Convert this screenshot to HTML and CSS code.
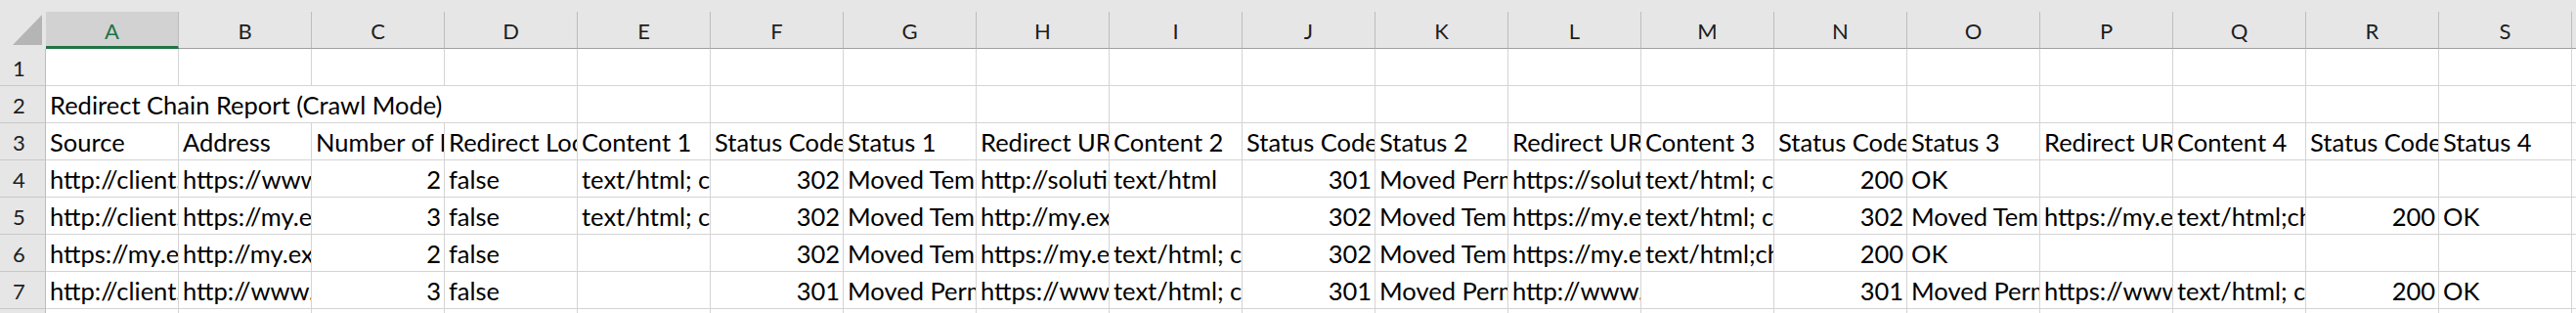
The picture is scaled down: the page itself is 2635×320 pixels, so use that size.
FILE: index.html
```html
<!DOCTYPE html>
<html lang="en">
<head>
    <meta charset="UTF-8">
    <meta name="viewport" content="width=device-width, initial-scale=1.0">
    <title>Redirect Chain Report</title>
    <link rel="stylesheet" href="styles.css">
</head>

<body>
    <div class="sheet">
        <!-- column headers -->
        <div class="corner"><span class="corner-mark"></span></div>
        <div class="col-head selected"><span class="col-label">A</span></div>
        <div class="col-head"><span class="col-label">B</span></div>
        <div class="col-head"><span class="col-label">C</span></div>
        <div class="col-head"><span class="col-label">D</span></div>
        <div class="col-head"><span class="col-label">E</span></div>
        <div class="col-head"><span class="col-label">F</span></div>
        <div class="col-head"><span class="col-label">G</span></div>
        <div class="col-head"><span class="col-label">H</span></div>
        <div class="col-head"><span class="col-label">I</span></div>
        <div class="col-head"><span class="col-label">J</span></div>
        <div class="col-head"><span class="col-label">K</span></div>
        <div class="col-head"><span class="col-label">L</span></div>
        <div class="col-head"><span class="col-label">M</span></div>
        <div class="col-head"><span class="col-label">N</span></div>
        <div class="col-head"><span class="col-label">O</span></div>
        <div class="col-head"><span class="col-label">P</span></div>
        <div class="col-head"><span class="col-label">Q</span></div>
        <div class="col-head"><span class="col-label">R</span></div>
        <div class="col-head"><span class="col-label">S</span></div>
        <div class="col-head"><span class="col-label"></span></div>

        <!-- row 1 -->
        <div class="row-head">1</div>
        <div class="cell"></div><div class="cell"></div><div class="cell"></div><div class="cell"></div>
        <div class="cell"></div><div class="cell"></div><div class="cell"></div><div class="cell"></div>
        <div class="cell"></div><div class="cell"></div><div class="cell"></div><div class="cell"></div>
        <div class="cell"></div><div class="cell"></div><div class="cell"></div><div class="cell"></div>
        <div class="cell"></div><div class="cell"></div><div class="cell"></div><div class="cell"></div>

        <!-- row 2 -->
        <div class="row-head">2</div>
        <div class="cell title">Redirect Chain Report (Crawl Mode)</div>
        <div class="cell"></div><div class="cell"></div><div class="cell"></div><div class="cell"></div>
        <div class="cell"></div><div class="cell"></div><div class="cell"></div><div class="cell"></div>
        <div class="cell"></div><div class="cell"></div><div class="cell"></div><div class="cell"></div>
        <div class="cell"></div><div class="cell"></div><div class="cell"></div><div class="cell"></div>

        <!-- row 3 -->
        <div class="row-head">3</div>
        <div class="cell">Source</div>
        <div class="cell">Address</div>
        <div class="cell">Number of Redirects</div>
        <div class="cell">Redirect Loop</div>
        <div class="cell">Content 1</div>
        <div class="cell">Status Code 1</div>
        <div class="cell">Status 1</div>
        <div class="cell">Redirect URL 1</div>
        <div class="cell">Content 2</div>
        <div class="cell">Status Code 2</div>
        <div class="cell">Status 2</div>
        <div class="cell">Redirect URL 2</div>
        <div class="cell">Content 3</div>
        <div class="cell">Status Code 3</div>
        <div class="cell">Status 3</div>
        <div class="cell">Redirect URL 3</div>
        <div class="cell">Content 4</div>
        <div class="cell">Status Code 4</div>
        <div class="cell">Status 4</div>
        <div class="cell"></div>

        <!-- row 4 -->
        <div class="row-head">4</div>
        <div class="cell">http://client.example.com/</div>
        <div class="cell">https://www.example.com/</div>
        <div class="cell num">2</div>
        <div class="cell">false</div>
        <div class="cell">text/html; charset=UTF-8</div>
        <div class="cell num">302</div>
        <div class="cell">Moved Temporarily</div>
        <div class="cell">http://solutions.example.com/</div>
        <div class="cell">text/html</div>
        <div class="cell num">301</div>
        <div class="cell">Moved Permanently</div>
        <div class="cell">https://solutions.example.com/</div>
        <div class="cell">text/html; charset=UTF-8</div>
        <div class="cell num">200</div>
        <div class="cell">OK</div>
        <div class="cell"></div>
        <div class="cell"></div>
        <div class="cell"></div>
        <div class="cell"></div>
        <div class="cell"></div>

        <!-- row 5 -->
        <div class="row-head">5</div>
        <div class="cell">http://client.example.com/login</div>
        <div class="cell">https://my.example.com/</div>
        <div class="cell num">3</div>
        <div class="cell">false</div>
        <div class="cell">text/html; charset=UTF-8</div>
        <div class="cell num">302</div>
        <div class="cell">Moved Temporarily</div>
        <div class="cell">http://my.example.com/</div>
        <div class="cell"></div>
        <div class="cell num">302</div>
        <div class="cell">Moved Temporarily</div>
        <div class="cell">https://my.example.com/</div>
        <div class="cell">text/html; charset=UTF-8</div>
        <div class="cell num">302</div>
        <div class="cell">Moved Temporarily</div>
        <div class="cell">https://my.example.com/</div>
        <div class="cell">text/html;charset=UTF-8</div>
        <div class="cell num">200</div>
        <div class="cell">OK</div>
        <div class="cell"></div>

        <!-- row 6 -->
        <div class="row-head">6</div>
        <div class="cell">https://my.example.com/</div>
        <div class="cell">http://my.example.com/</div>
        <div class="cell num">2</div>
        <div class="cell">false</div>
        <div class="cell"></div>
        <div class="cell num">302</div>
        <div class="cell">Moved Temporarily</div>
        <div class="cell">https://my.example.com/</div>
        <div class="cell">text/html; charset=UTF-8</div>
        <div class="cell num">302</div>
        <div class="cell">Moved Temporarily</div>
        <div class="cell">https://my.example.com/</div>
        <div class="cell">text/html;charset=UTF-8</div>
        <div class="cell num">200</div>
        <div class="cell">OK</div>
        <div class="cell"></div>
        <div class="cell"></div>
        <div class="cell"></div>
        <div class="cell"></div>
        <div class="cell"></div>

        <!-- row 7 -->
        <div class="row-head">7</div>
        <div class="cell">http://client.example.com/</div>
        <div class="cell">http://www.example.com/</div>
        <div class="cell num">3</div>
        <div class="cell">false</div>
        <div class="cell"></div>
        <div class="cell num">301</div>
        <div class="cell">Moved Permanently</div>
        <div class="cell">https://www.example.com/</div>
        <div class="cell">text/html; charset=UTF-8</div>
        <div class="cell num">301</div>
        <div class="cell">Moved Permanently</div>
        <div class="cell">http://www.example.com/</div>
        <div class="cell"></div>
        <div class="cell num">301</div>
        <div class="cell">Moved Permanently</div>
        <div class="cell">https://www.example.com/</div>
        <div class="cell">text/html; charset=UTF-8</div>
        <div class="cell num">200</div>
        <div class="cell">OK</div>
        <div class="cell"></div>

        <!-- row 8 (cut off) -->
        <div class="row-head">8</div>
        <div class="cell"></div><div class="cell"></div><div class="cell"></div><div class="cell"></div>
        <div class="cell"></div><div class="cell"></div><div class="cell"></div><div class="cell"></div>
        <div class="cell"></div><div class="cell"></div><div class="cell"></div><div class="cell"></div>
        <div class="cell"></div><div class="cell"></div><div class="cell"></div><div class="cell"></div>
        <div class="cell"></div><div class="cell"></div><div class="cell"></div><div class="cell"></div>
    </div>
</body>
</html>
```

FILE: styles.css
```css
body {
    margin: 0;
    font-family: Lato, "Open Sans", sans-serif;
    background-color: #ffffff;
    color: #000000;
    overflow: hidden;
}

.sheet {
    display: grid;
    grid-template-columns: 47px repeat(19, 136px) 1fr;
    grid-template-rows: 50px repeat(7, 38px) 38px;
}

/* top-left corner */
.corner {
    display: flex;
    justify-content: flex-end;
    align-items: flex-end;
    padding: 0 4px 4px 0;
    background-color: #e6e6e6;
}

.corner-mark {
    width: 30px;
    height: 31px;
    background-color: #b5b5b5;
    clip-path: polygon(100% 0, 100% 100%, 0 100%);
}

/* column headers */
.col-head {
    padding-top: 12px;
    background-color: #e6e6e6;
}

.col-label {
    display: block;
    box-sizing: border-box;
    height: 38px;
    padding-top: 7px;
    border-right: 1px solid #bdbdbd;
    border-bottom: 1px solid #9f9f9f;
    font-size: 22px;
    line-height: 26px;
    text-align: center;
    color: #1e1e1e;
}

.col-head.selected .col-label {
    background-color: #d2d2d2;
    border-bottom: 3px solid #217346;
    color: #217346;
}

/* row headers */
.row-head {
    box-sizing: border-box;
    padding: 7px 7px 0 0;
    background-color: #e6e6e6;
    border-right: 1px solid #bdbdbd;
    border-bottom: 1px solid #c8c8c8;
    font-size: 22px;
    line-height: 26px;
    text-align: center;
    color: #1e1e1e;
}

/* cells */
.cell {
    box-sizing: border-box;
    padding: 4px 3px 0 4px;
    border-right: 1px solid #d4d4d4;
    border-bottom: 1px solid #d4d4d4;
    font-size: 25.5px;
    line-height: 30px;
    white-space: nowrap;
    overflow: hidden;
}

.cell.num {
    text-align: right;
}

.cell.title {
    grid-column: span 4;
}
```
